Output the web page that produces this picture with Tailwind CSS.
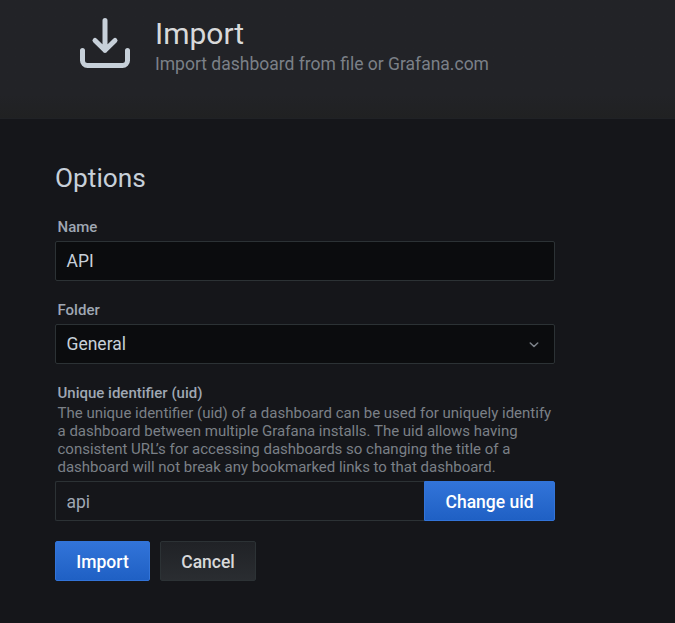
<!DOCTYPE html>
<html lang="en">
<head>
<meta charset="utf-8">
<title>Import</title>
<script src="https://cdn.jsdelivr.net/npm/@tailwindcss/browser@4"></script>
</head>
<body class="h-[623px] overflow-hidden bg-[#15161a] font-[Roboto,sans-serif] text-[17.5px] text-[#c7d0d9]">
<header class="flex h-[119px] border-b border-[#202226] bg-linear-to-b from-[#222327] from-80% to-[#202122] pl-[80px]">
  <svg class="mt-[18px] h-[50px] w-[50px] shrink-0" viewBox="0 0 50 50" fill="none" stroke="#c7d0d9" stroke-width="5" stroke-linecap="round" stroke-linejoin="round"><path d="M25 2.5V32.3M15 22.5l10 9.8 10-9.8M2.5 32.5v10a5 5 0 0 0 5 5h35a5 5 0 0 0 5-5v-10"/></svg>
  <div class="ml-[25px] pt-[15px]">
    <h1 class="text-[30px] leading-[38px] text-[#d8d9da]">Import</h1>
    <p class="-mt-px text-[17.5px] leading-[24px] text-[#7b8087]">Import dashboard from file or Grafana.com</p>
  </div>
</header>
<main class="w-[555px] pl-[55px] pt-[43px]">
  <h2 class="text-[26.25px] leading-[32px]">Options</h2>
  <label class="mt-[24px] block pl-[2.5px] text-[15px] leading-[18px] font-medium text-[#9fa7b3]">Name</label>
  <div class="mt-[5px] flex h-[40px] items-center rounded-[2px] border border-[#2c3235] bg-[#0b0c0e] px-[10.5px]">API</div>
  <label class="mt-[20px] block pl-[2.5px] text-[15px] leading-[18px] font-medium text-[#9fa7b3]">Folder</label>
  <div class="mt-[5px] flex h-[40px] items-center justify-between rounded-[2px] border border-[#2c3235] bg-[#0b0c0e] px-[10.5px]">General
    <svg class="mr-[5px] h-[10px] w-[10px]" viewBox="0 0 10 10" fill="none" stroke="#7b8087" stroke-width="1.6" stroke-linecap="round" stroke-linejoin="round"><path d="M1.3 4l3.7 3.5L8.7 4"/></svg>
  </div>
  <label class="mt-[20px] block pl-[2.5px] text-[15px] leading-[18px] font-medium text-[#9fa7b3]">Unique identifier (uid)</label>
  <p class="mt-[2px] pl-[2.5px] text-[15px] leading-[18px] whitespace-nowrap text-[#7b8087]">The unique identifier (uid) of a dashboard can be used for uniquely identify<br>a dashboard between multiple Grafana installs. The uid allows having<br>consistent UR<span class="tracking-[-2.3px]">L</span>’s for accessing dashboards so changing the title of a<br>dashboard will not break any bookmarked links to that dashboard.</p>
  <div class="mt-[5px] flex h-[40px]">
    <div class="flex w-[369px] items-center rounded-l-[2px] border border-r-0 border-[#2c3235] px-[10.5px] pt-[2px] text-[#9fa7b3]">api</div>
    <button class="flex-1 rounded-r-[2px] border border-[#3274d9] bg-linear-to-b from-[#3274d9] to-[#1f60c4] pt-[2px] font-medium text-white">Change uid</button>
  </div>
  <div class="mt-[20px] flex gap-[10px]">
    <button class="h-[40px] w-[95px] rounded-[2px] border border-[#3274d9] bg-linear-to-b from-[#3274d9] to-[#1f60c4] pt-[2px] font-medium text-white">Import</button>
    <button class="h-[40px] w-[96px] rounded-[2px] border border-[#2c3235] bg-linear-to-b from-[#202226] to-[#2a2d31] pt-[2px] font-medium text-[#d8d9da]">Cancel</button>
  </div>
</main>
</body>
</html>
